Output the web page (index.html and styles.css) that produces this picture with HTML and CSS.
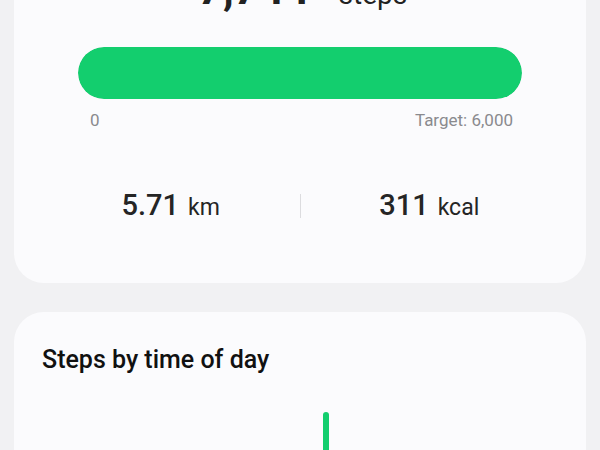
FILE: index.html
```html
<!DOCTYPE html>
<html lang="en">
<head>
  <meta charset="UTF-8">
  <title>Steps</title>
  <link rel="stylesheet" href="styles.css">
</head>
<body>
  <div class="page">
    <div class="card summary">
      <div class="total">
        <span class="total-num">7,744</span>
        <span class="total-unit">steps</span>
      </div>

      <div class="progress">
        <div class="track">
          <div class="fill" style="width: 100%"></div>
        </div>
        <div class="labels">
          <span>0</span>
          <span>Target: 6,000</span>
        </div>
      </div>

      <div class="stats">
        <div class="stat"><span class="stat-num">5.71</span><span class="stat-unit">km</span></div>
        <div class="divider"></div>
        <div class="stat"><span class="stat-num">311</span><span class="stat-unit">kcal</span></div>
      </div>
    </div>

    <div class="card hourly">
      <h2 class="card-title">Steps by time of day</h2>
      <div class="chart" id="chart"></div>
    </div>
  </div>

  <script>
    const hours = [0, 0, 0, 0, 0, 0, 20, 45, 60, 30, 25, 40, 55, 140, 35, 30, 50, 70, 65, 40, 25, 15, 5, 0];
    const chart = document.getElementById("chart");
    hours.forEach(h => {
      const col = document.createElement("div");
      col.classList.add("col");
      if (h > 0) {
        const bar = document.createElement("div");
        bar.classList.add("bar");
        bar.style.height = h + "px";
        col.appendChild(bar);
      }
      chart.appendChild(col);
    });
  </script>
</body>
</html>
```

FILE: styles.css
```css
body {
  margin: 0;
  overflow: hidden;
  background-color: #f1f1f3;
  font-family: Roboto, "Liberation Sans", sans-serif;
  color: #1f1f1f;
}
.page {
  padding: 0 14px;
}
.card {
  background-color: #fbfbfd;
  border-radius: 30px;
  padding: 0 28px;
}
.summary {
  margin-top: -70px;
  padding-top: 33px;
  padding-bottom: 55px;
}
.total {
  display: flex;
  justify-content: center;
  align-items: baseline;
  gap: 29px;
  line-height: 52px;
  color: #222;
  padding-left: 5px;
}
.total-num {
  font-size: 44px;
  font-weight: 700;
}
.total-unit {
  font-size: 28px;
}
.progress {
  margin: 26px 36px 0;
}
.track {
  height: 52px;
  border-radius: 26px;
  background-color: #e4e4e8;
  overflow: hidden;
}
.fill {
  height: 100%;
  border-radius: 26px;
  background-color: #13ce6e;
}
.labels {
  display: flex;
  justify-content: space-between;
  margin-top: 10px;
  padding: 0 9px 0 12px;
  font-size: 17px;
  line-height: 22px;
  color: #8a8a8e;
}
.stats {
  display: flex;
  align-items: center;
  margin-top: 56px;
  line-height: 36px;
}
.stat {
  flex: 1;
  text-align: center;
  color: #252525;
}
.stat-num {
  font-size: 29px;
  font-weight: 500;
}
.stat-unit {
  margin-left: 9px;
  font-size: 23px;
}
.divider {
  width: 1px;
  height: 24px;
  margin-top: -3px;
  background-color: #dcdcdf;
}
.hourly {
  margin-top: 29px;
  padding-top: 32px;
  padding-bottom: 20px;
}
.card-title {
  margin: 0;
  font-size: 25px;
  font-weight: 500;
  line-height: 32px;
  color: #111;
}
.chart {
  display: grid;
  grid-template-columns: repeat(24, 1fr);
  align-items: end;
  height: 160px;
  margin-top: 16px;
  padding-right: 11px;
}
.col {
  display: flex;
  justify-content: center;
  align-items: flex-end;
  height: 100%;
}
.bar {
  width: 6px;
  border-radius: 3px 3px 0 0;
  background-color: #13ce6e;
}
```
